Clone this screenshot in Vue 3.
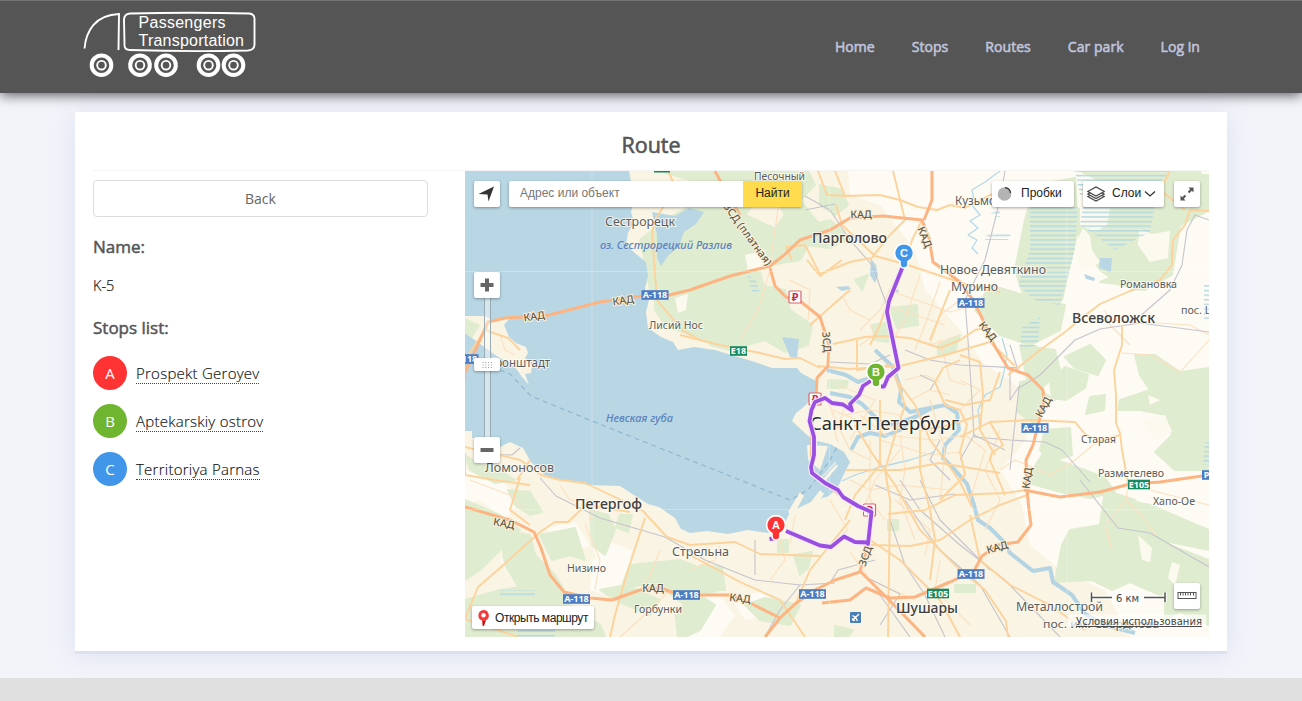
<script setup>
const nav = ['Home', 'Stops', 'Routes', 'Car park', 'Log in']
const wheels = [101.5, 140, 166, 208.5, 233.5]

const stops = [
  { letter: 'A', name: 'Prospekt Geroyev', color: '#ff3333' },
  { letter: 'B', name: 'Aptekarskiy ostrov', color: '#70b530' },
  { letter: 'C', name: 'Territoriya Parnas', color: '#4296ea' },
]

// Map geometry is kept in page units: x 465-1209, y 171-637
const rural = [
  'M848 171H1209V637H1130L1105 590 1060 570 1030 545 1022 505 1000 470 1026 440 1030 400 1010 380 985 365 960 330 925 290 915 250 880 205 850 195Z',
  'M465 470 500 478 520 500 505 520 480 500 465 505Z',
  'M592 560 625 552 645 575 620 600 590 590Z',
  'M500 560 520 545 530 570 515 585Z',
  'M690 600 720 595 735 615 720 637H690Z',
  'M590 535 632 550 625 580 600 575Z',
  'M732 600 765 590 780 612 745 620Z',
  'M545 528 575 522 590 545 570 555Z',
]
const greens = [
  'M660 171H750L765 190 745 215 778 230 765 255 745 268 700 275 675 300 650 290 645 262 640 240 665 220 700 200 690 180Z',
  'M750 171H808L815 185 800 200 820 225 800 260 770 265 762 245 785 215 770 190Z',
  'M655 275 720 265 760 272 765 290 740 325 725 330 715 345 690 335 665 325 655 310Z',
  'M760 285 785 290 790 310 812 325 808 345 785 352 765 340 730 350 710 345 735 325Z',
  'M820 185 842 190 848 205 835 215 820 205Z',
  'M800 228 830 220 850 238 830 248 806 245Z',
  'M1035 185 1075 178 1078 230 1062 300 1050 310 1025 300 1015 270 1025 220Z',
  'M1080 171H1200L1209 210 1180 225 1172 275 1145 290 1120 285 1100 270 1080 240 1075 210 1130 195Z',
  'M990 285 1040 300 1065 305 1060 330 1030 345 1000 335 975 310Z',
  'M1165 175H1209V210L1180 225Z',
  'M1100 282 1150 262 1165 275 1140 290 1125 285Z',
  'M1020 345 1055 350 1060 370 1040 390 1055 400 1030 395Z',
  'M1065 357 1090 345 1105 360 1098 375 1075 368Z',
  'M1065 367 1088 375 1085 388 1066 400 1052 398 1050 382Z',
  'M1090 397 1105 395 1104 410 1086 414Z',
  'M1135 355 1155 355 1180 372 1209 368V470H1175L1155 452 1172 435 1165 415 1140 410 1118 410 1120 400 1150 390 1140 375Z',
  'M1045 430 1070 428 1072 455 1050 462 1040 450Z',
  'M1020 382 1035 380 1042 400 1035 425 1018 412Z',
  'M1105 490 1135 500 1150 520 1170 545 1209 560V605L1180 590 1160 595 1130 582 1112 590 1092 580 1055 582 1062 545 1070 530 1100 525Z',
  'M1042 455 1085 470 1105 478 1115 492 1090 498 1060 492 1025 482Z',
  'M1126 500 1150 505 1209 530V550L1160 540 1140 530Z',
  'M1165 575 1200 575 1209 590V625L1180 612 1165 620Z',
  'M465 500 500 515 520 530 500 550 480 570 465 580Z',
  'M500 530 530 535 535 555 555 575 570 600 555 615 520 590 505 565Z',
  'M500 590 535 585 570 605 600 625 605 637H465V600Z',
  'M508 490 530 492 542 512 530 515 515 505Z',
  'M540 535 575 528 585 560 570 555 552 560Z',
  'M590 510 608 515 615 530 605 555 592 545Z',
  'M620 515 632 515 628 532 616 527Z',
  'M630 565 680 560 705 570 720 590 700 595 685 605 665 590 640 585 620 590Z',
  'M600 590 625 585 660 600 650 615 615 600Z',
  'M675 610 700 595 715 605 700 630 685 637H678Z',
  'M700 565 722 567 725 590 700 590Z',
  'M794 555 812 552 808 568 800 575Z',
  'M745 605 765 598 800 605 790 625 760 620Z',
  'M778 540 788 540 788 552 778 552Z',
  'M890 308 917 305 918 325 897 328Z',
  'M828 380 848 381 846 388 828 388Z',
  'M938 345 960 335 955 352 938 355Z',
  'M872 325 890 322 888 342 875 340Z',
  'M888 520 898 520 898 530 888 530Z',
  'M835 626 853 630 848 637H835Z',
  'M955 585 975 585 975 592 955 592Z',
  'M855 280 868 275 862 290Z',
  'M465 455 480 465 500 470 515 480 495 483 470 470Z',
  'M1055 190 1070 185 1070 205 1060 210Z',
]
const clearings = [
  'M1139 229 1152 234 1170 231 1168 258 1150 262 1138 245Z',
  'M1083 228 1090 236 1092 250 1100 262 1085 272 1076 262 1075 245Z',
  'M1080 205 1110 208 1107 225 1095 232 1080 225Z',
  'M675 298 688 294 686 310 678 313Z',
  'M745 255 765 250 768 268 748 270Z',
  'M1140 420 1165 415 1172 432 1155 440Z',
  'M1148 395 1160 400 1150 405Z',
  'M1138 535 1152 548 1150 562 1142 560Z',
  'M1172 562 1180 565 1175 585 1168 578Z',
]
const waters = [
  'M465 171H629L631 182 641 190 634 201 631 212 634 222 628 233 626 245 636 254 646 262 648 276 645 288 649 300 646 312 648 328 661 337 673 342 678 350 694 347 715 350 738 357 755 362 772 368 797 368 801 373 818 382 815 394 806 405 796 413 792 421 806 434 813 440 830 444 844 452 850 462 843 476 838 487 829 496 813 501 790 512 783 527 768 533 748 530 728 534 707 531 690 533 681 529 675 518 659 507 648 504 620 486 588 485 566 481 548 478 531 462 523 448 510 442 500 447 491 440 472 438 472 431 465 431Z',
  'M652 212 675 216 689 208 704 212 696 224 684 232 679 246 668 256 661 266 657 258 657 235Z',
  'M782 337 799 339 797 358 790 357Z',
  'M1100 258 1112 258 1111 272 1099 268Z',
  'M1084 274 1095 278 1094 281 1086 279Z',
  'M871 259 876 265 878 275 875 283 870 275Z',
  'M892 287 895 284 899 292 895 293Z',
  'M836 287 848 286 851 289 842 291Z',
]
const island = 'M465 316H485L492 320 510 318 504 325 509 337 516 343 526 347 528 353 525 358 532 365 531 373 525 374 529 385 522 377 515 367 498 357 487 349 465 333Z'
const rivers = [
  'M827 370 846 375 858 382 870 378 880 379',
  'M830 393 850 397 862 404 880 422 893 425 915 417 928 410 935 407',
  'M875 350 893 367 901 390 899 402 910 412 930 408 945 405 957 413 959 430 945 445 943 458 955 470 967 484 974 505 978 520 990 528 1005 543 1010 553 1033 571 1050 568 1053 582 1072 595 1085 614 1104 625 1135 633',
  'M851 450 858 437 870 433 885 436 900 430 916 416',
]
const streams = [
  'M1002 338 1007 355 1004 372 1000 387 985 395 978 410 980 428',
  'M972 205 980 215 970 221 978 228 968 235 977 240 972 248 978 254',
  'M842 481 855 475 880 467 910 460 935 452',
  'M1000 171 985 182 972 190 974 200',
  'M816 486 830 470 845 455',
  'M640 430 648 426',
]
const highways = [
  'M465 372 470 362 480 340 488 322 505 318 545 316 600 302 642 296 665 296 690 290 730 276 770 266 783 256 800 240 830 230 850 218 883 216 922 220 929 238 933 262 960 282 973 300 984 322 994 345 1008 368 1028 375 1043 390 1044 402 1038 425 1033 445 1026 460 1027 490 1029 510 1031 525 1018 542 998 545 982 556 974 571 950 582 915 597 890 598 866 588 850 600 822 603',
  'M770 268 775 286 786 297 800 301 820 317 829 345 828 366 817 378 816 398 810 415 812 440 811 470 840 495 871 513 868 545 860 571 892 603 925 637',
  'M465 507 510 520 534 532 541 548 550 575 564 592 590 598 612 600 640 590 660 588 680 595 730 595 752 604 780 618 795 604 815 590 835 580 860 572',
  'M1024 490 1060 497 1100 492 1130 484 1160 482 1209 475',
  'M932 171 932 200 924 220',
  'M715 171 725 190 740 215',
  'M780 618 765 637',
]
const roads = [
  'M835 171 845 196 880 195 900 200 918 207 937 210 950 205 965 208 990 195 1005 191',
  'M836 205 842 225 875 256 905 264 965 284 1000 292',
  'M818 171 827 195 850 196',
  'M922 220 912 240 905 264',
  'M792 260 786 247 805 245 820 274 850 262 870 258',
  'M807 260 820 276 842 260',
  'M668 171 676 188 656 218 652 232 655 275 657 300 682 330 700 340',
  'M850 290 835 303 810 325',
  'M1172 258 1173 240 1185 225 1190 210 1209 211',
  'M1172 250 1172 265 1160 280 1130 291 1100 304 1083 317 1065 332 1040 350 1020 366 1008 375',
  'M1122 325 1122 345 1114 370 1116 395 1116 423 1120 433 1122 450 1128 483',
  'M680 335 720 345 760 353 785 359 800 358 820 368',
  'M960 437 990 422 1030 420 1075 422 1085 434 1098 441 1120 435',
  'M990 422 1003 445 992 453 990 460 1005 495',
  'M818 366 850 369 900 366 945 355 990 342 1015 366',
  'M893 328 895 350 895 375 905 405 895 435 885 470 890 500 888 637',
  'M833 344 865 337 883 336 910 338 940 348 960 340 975 330 985 328',
  'M960 360 943 368 935 382 945 405 960 410 967 425 960 452 965 475 950 490 940 500',
  'M845 470 865 470 900 470 940 463 970 468 1000 473',
  'M888 514 925 510 955 495 1005 493 1027 490',
  'M870 545 910 546 940 540 970 520 1000 505 1027 495',
  'M855 425 870 450 880 465 855 495 845 520',
  'M895 378 915 405 930 440 945 460 960 482 972 507',
  'M893 171 905 220 890 235 870 260',
  'M960 355 980 362 983 395 980 430 995 455',
  'M1000 372 990 400 965 405 945 400',
  'M880 465 880 400',
  'M920 430 920 470 930 510 935 540 930 580',
  'M857 340 857 370 890 365',
  'M878 460 895 485 920 530 960 570 985 590 1006 621 1008 637',
  'M465 447 495 454 520 460 541 475 560 480 585 483 600 490 642 510 667 537 690 545 735 542 760 554 820 556',
  'M518 637 465 619 478 587 500 568 540 532 555 522 568 522 586 505 630 512',
  'M520 478 510 510 530 525',
  'M530 460 517 480',
  'M645 518 628 570 615 615 610 637',
  'M690 555 740 582 780 600 805 637',
  'M850 520 830 545 810 570 795 605 780 618',
  'M970 515 980 560 1010 585 1050 605 1085 630',
  'M870 540 900 560 930 590 940 600 960 637',
  'M922 430 950 425 980 415',
  'M895 280 880 325 870 345',
  'M950 290 930 340',
  'M1170 171 1160 190 1185 210',
  'M465 453 465 475 495 480 530 485',
  'M465 360 485 330 508 338 520 350',
]
const minor = [
  'M900 270 880 310 860 330', 'M920 275 905 320 890 345', 'M940 282 925 325 915 350',
  'M888 290 950 312 975 305', 'M885 305 945 325', 'M843 297 850 310 870 320',
  'M838 385 875 400 850 440', 'M827 400 840 430 850 450 870 460', 'M832 410 870 425',
  'M848 400 835 432 838 442', 'M860 415 885 435 935 440 965 435', 'M900 435 905 470 900 500 915 540',
  'M910 400 930 390 950 395', 'M905 380 925 375 940 382', 'M880 440 930 455 962 452',
  'M850 480 870 490 900 485 950 490', 'M870 440 870 500 885 520', 'M930 400 945 450 940 500',
  'M900 450 875 480 865 505', 'M895 500 930 530 925 555', 'M1000 430 985 470 1000 500 985 530',
  'M965 435 985 450 970 500', 'M960 380 980 390 960 410', 'M940 340 950 380 965 385',
  'M860 345 875 335 870 325', 'M1122 353 1150 355 1180 372 1209 340', 'M1098 441 1075 460 1050 475 1015 460 1000 470',
  'M1105 310 1110 325 1130 345', 'M1110 320 1190 325 1209 335', 'M1128 483 1126 500 1105 525 1112 550',
  'M1126 500 1145 520 1155 535', 'M1150 490 1209 505', 'M470 480 510 495 525 510',
  'M560 485 570 500 595 500 590 520', 'M660 550 650 575 640 590', 'M720 545 715 560 690 570',
  'M780 540 785 560 770 580', 'M620 637 650 610 670 590', 'M585 524 600 560 595 590',
  'M795 515 790 545', 'M830 500 848 530 825 550', 'M500 335 505 350 515 355',
  'M790 280 810 290 808 320', 'M770 270 758 310 740 340', 'M850 552 870 580 915 600',
  'M940 560 935 590 970 625', 'M870 430 905 425 935 432', 'M845 415 870 410 900 415',
  'M960 300 940 315 930 345 960 335', 'M780 195 775 230 770 265',
]
const rails = [
  'M805 196 830 210 850 240 872 265 885 300 895 355', 'M465 360 466 380',
  'M1005 171 1000 200 985 260 965 300 968 340 972 400 974 437', 'M974 437 1010 440 1045 442 1062 450 1090 482',
  'M960 460 974 435 1005 450', 'M1010 470 1013 440 1019 388 1040 375 1075 340 1100 329 1140 323 1209 332',
  'M1209 220 1195 215 1187 230 1182 265 1170 290 1130 325', 'M540 478 556 496 600 518 665 537 705 560 755 580 800 585 835 583',
  'M755 540 755 575', 'M800 585 780 610 765 637', 'M830 583 838 570 875 560',
  'M905 500 925 530 940 550 980 585 1010 637', 'M900 480 920 510 960 545 1005 580 1060 637',
  'M870 579 900 594 880 625', 'M920 480 940 520 990 570', 'M920 375 935 382 930 390',
  'M890 520 905 565 925 595 945 637', 'M880 595 910 637', 'M905 350 930 360 960 365 1020 368',
  'M875 485 910 500 955 494', 'M1010 370 1010 400 1020 385', 'M830 362 870 364 890 355',
  'M1080 480 1118 528 1150 533 1209 567', 'M940 440 930 460 950 480', 'M1010 345 1018 370', 'M480 454 512 455 520 448',
  'M805 210 835 204',
]
const bogs = [
  'M1030 205H1078L1075 250 1060 305 1035 300 1018 285 1030 250Z', 'M1075 171H1170L1160 182 1080 195Z',
  'M1085 195 1155 205 1150 232 1115 250 1095 235 1080 225Z', 'M1022 327 1040 317 1038 345 1020 350Z',
  'M987 235 1012 232 1008 240H985Z', 'M1204 285H1209V320H1204Z', 'M1205 442H1209V465H1203Z',
  'M500 590H535V596H500Z', 'M520 626H555V637H515Z', 'M748 275 756 280 760 293 752 292Z', 'M985 215 1000 210 1000 217Z',
]
const badges = [
  ['А-118', 655, 295], ['А-118', 971, 303], ['А-118', 1035, 428], ['А-118', 576.5, 599],
  ['А-118', 686.5, 595], ['А-118', 812.5, 594], ['А-118', 971, 574], ['А-118', 465, 359],
  ['Е18', 738.5, 351, 1], ['Е105', 1139, 484.5, 1], ['Е105', 938, 593.5, 1], ['Р-21', 1213, 475],
]
// text, left edge, baseline, drawn width, size, style class
const places = [
  ['Песочный', 754, 180, 51, 10.5], ['Сестрорецк', 605, 226, 70, 12],
  ['Парголово', 812, 243, 75, 14, 'town'], ['Кузьмолово', 955, 205, 68, 12],
  ['Новое Девяткино', 940, 274, 106, 12], ['Мурино', 951, 290.5, 47, 12.5],
  ['Романовка', 1120, 287.5, 57, 11], ['Всеволожск', 1072, 323, 83, 14, 'town'],
  ['пос. Щеглово', 1181, 313.5, 70, 10.5], ['Лисий Нос', 649, 328.5, 54, 11],
  ['Кронштадт', 488, 367, 62, 12], ['Ломоносов', 485, 472, 69, 12],
  ['Петергоф', 575, 509, 67, 14.5, 'town'], ['Стрельна', 672, 556, 57, 12.5],
  ['Низино', 567, 572, 39, 10.5], ['Горбунки', 634, 612.5, 48, 10.5],
  ['Шушары', 896, 613, 62, 14, 'town'], ['Металлострой', 1016, 611, 87, 12],
  ['пос. им. Свердлова', 1043, 628, 116, 11.5], ['Старая', 1081, 443, 35, 11],
  ['Разметелево', 1098, 477, 66, 11], ['Хапо-Ое', 1153, 505, 42, 11],
  ['Санкт-Петербург', 810, 429.5, 149, 18.5, 'city'],
  ['оз. Сестрорецкий Разлив', 600, 249, 132, 11, 'sea'], ['Невская губа', 606, 421.5, 67, 11.5, 'sea'],
]
const roadNames = [
  ['КАД', 534, 316, -8], ['КАД', 623, 300, -8], ['КАД', 861, 214, -2], ['КАД', 925, 237, 68],
  ['КАД', 988, 331, 52], ['КАД', 1043, 407, -62], ['КАД', 1027, 478, -82], ['КАД', 997, 547, -16],
  ['КАД', 504, 523, 10], ['КАД', 653, 588, 0], ['КАД', 740, 598, 6], ['ЗСД', 827, 342, 86], ['ЗСД', 865, 556, -70],
]
const tolls = [[795, 297], [815, 399], [869.5, 510]]
const pins = [['A', 776, 525, '#ff3333'], ['B', 876, 372, '#70b530'], ['C', 904, 253, '#4296ea']]
const route = 'M769.500 539 777 538M786 531 820 545.500 831 547 844 536.500 855 542 868 542.500 868 544 871.500 512 858 506 843 497 838 490 825 483 812 473 811 467 814 455 814 437 809.500 421 811.500 410 815 402 825 398 832 403 843 404.500 852 410.500 850 404 859 395 863 386 872 380M881 386.500H884L888 377 898.500 368 887 312 889 301 903 266'
const scale = 'M1091.500 592.500V602M1091.500 597.500H1112M1144 597.500H1164.500M1165 592.500V602'
</script>

<template>
  <div class="page">
    <header class="header">
      <svg class="logo" viewBox="80 8 180 72" width="180" height="72">
        <g fill="none" stroke="#fff" stroke-width="1.900">
          <path d="M84.500 48.500C86 31 95 15 119 14L118.500 50" />
          <path d="M130 13.500Q190 12 249 13.500Q255 14 254.500 20V45Q254 50 248 50.500Q190 52 130 50Q124 50 124.500 44L124 20Q124 14 130 13.500Z" />
        </g>
        <g v-for="x in wheels" :key="x" fill="none" stroke="#fff">
          <circle :cx="x" cy="65.200" r="9.800" stroke-width="4" />
          <circle :cx="x" cy="65.200" r="4.300" stroke-width="1.900" />
        </g>
        <g class="logo-text">
          <text x="138.500" y="28" textLength="87">Passengers</text>
          <text x="138.500" y="46" textLength="105.500">Transportation</text>
        </g>
      </svg>
      <nav class="nav">
        <a v-for="n in nav" :key="n">{{ n }}</a>
      </nav>
    </header>

    <main class="card">
      <h1>Route</h1>
      <div class="columns">
        <section class="info">
          <button class="back">Back</button>
          <h2>Name:</h2>
          <p>K-5</p>
          <h2 class="list-title">Stops list:</h2>
          <ul>
            <li v-for="s in stops" :key="s.letter">
              <span class="dot" :style="{ background: s.color }">{{ s.letter }}</span>
              <span class="stop">{{ s.name }}</span>
            </li>
          </ul>
        </section>

        <section class="map">
          <svg class="canvas" viewBox="465 171 744 466" width="744" height="466">
            <defs>
              <pattern id="bog" width="8" height="4.600" patternUnits="userSpaceOnUse">
                <rect width="8" height="1.500" fill="#b5d9e2" />
              </pattern>
            </defs>
            <rect x="465" y="171" width="744" height="466" fill="#f9f4e3" />
            <path v-for="d in rural" :key="d" :d="d" fill="#fefbf4" />
            <path v-for="d in greens" :key="d" :d="d" class="green" />
            <path v-for="d in clearings" :key="d" :d="d" fill="#fcf9ef" />
            <path v-for="d in bogs" :key="d" :d="d" fill="url(#bog)" />
            <path v-for="d in waters" :key="d" :d="d" fill="#b9d6e4" />
            <path :d="island" fill="#f9f4e3" />
            <path d="M465 318 480 325 472 338 465 333Z" fill="#e0ecd0" />
            <path d="M807 445 828 446 820 470 808 460Z M818 481 835 462 838 466 822 485Z M788 512 800 492 804 496 793 516Z M805 510 820 490 824 494 812 512Z" fill="#f9f4e3" />
            <g class="line">
              <path v-for="d in streams" :key="d" :d="d" stroke="#b4d8e8" stroke-width="1.300" />
              <path v-for="d in rivers" :key="d" :d="d" stroke="#b4d4e4" stroke-width="4" />
              <path v-for="d in minor" :key="d" :d="d" stroke="#fde0bf" stroke-width="1.100" />
              <path v-for="d in rails" :key="d" :d="d" stroke="#c5c4cc" stroke-width="1.100" />
              <path v-for="d in roads" :key="d" :d="d" stroke="#fdd39b" stroke-width="1.900" />
              <path v-for="d in highways" :key="d" :d="d" stroke="#fcb482" stroke-width="3" />
              <path d="M500 370 510 374 531 396 592 421 715 470 790 500 808 490 830 460 838 445" stroke="#8db9d0" stroke-width="1.200" stroke-dasharray="5 4" />
              <path d="M592 171V637M1067 171V637M465 271.500H1209M465 509.500H1209M829.500 171V637" stroke="#fff" stroke-opacity=".35" stroke-width=".8" />
            </g>
            <g v-for="b in badges" :key="b[1] + '-' + b[2]">
              <rect :x="b[1] - (b[0].length * 2.500 + 1)" :y="b[2] - 4.800" :width="b[0].length * 5 + 2" height="9.600" :fill="b[3] ? '#188a62' : '#4b7cc4'" />
              <text class="badge" :x="b[1]" :y="b[2] + 3.300">{{ b[0] }}</text>
            </g>
            <rect x="654" y="168" width="16" height="4.500" fill="#188a62" />
            <g v-for="t in tolls" :key="t[0]">
              <rect :x="t[0] - 6" :y="t[1] - 6" width="12" height="12" rx="1" fill="#fff" stroke="#dc6570" stroke-width="1.200" />
              <text class="toll" :x="t[0]" :y="t[1] + 4">₽</text>
            </g>
            <text v-for="r in roadNames" :key="r[1]" class="road" :transform="`translate(${r[1]} ${r[2]}) rotate(${r[3]})`" y="4">{{ r[0] }}</text>
            <text class="road" transform="translate(748 234) rotate(54)" y="4" textLength="74">ЗСД (платная)</text>
            <text v-for="p in places" :key="p[0]" :x="p[1]" :y="p[2]" :textLength="p[3]" lengthAdjust="spacingAndGlyphs" :font-size="p[4]" :class="['place', p[5]]">{{ p[0] }}</text>
            <g transform="translate(855.500 617.500)">
              <rect x="-5.500" y="-5.500" width="11" height="11" rx="1" fill="#477fb6" />
              <path d="M3.500-3.500-3 3M-3-2 0 0 2 3.500M-3.500 1 -1 3.500" fill="none" stroke="#fff" stroke-width="1.500" />
            </g>
            <g class="line">
              <path :d="route" stroke="#f6eafd" stroke-width="6" />
              <path :d="route" stroke="#9a4fe0" stroke-width="3.800" />
            </g>
            <g v-for="p in pins" :key="p[0]" :transform="`translate(${p[1]} ${p[2]})`">
              <path d="M0-9.400A9.400 9.400 0 0 1 4 8.500V11A4 4 0 0 1-4 11V8.500A9.400 9.400 0 0 1 0-9.400Z" :fill="p[3]" stroke="#fff" stroke-width="1.600" />
              <text class="pin" y="3.900">{{ p[0] }}</text>
            </g>
            <g>
              <rect x="1068" y="614.500" width="138" height="12.500" fill="#fff" opacity=".65" />
              <rect x="1112" y="591" width="32" height="13" rx="2" fill="#fff" opacity=".75" />
              <path :d="scale" fill="none" stroke="#fff" stroke-width="4" opacity=".7" />
              <path :d="scale" fill="none" stroke="#555" stroke-width="1.500" />
              <text class="copy" x="1116" y="602" textLength="23">6 км</text>
              <text class="copy" x="1076" y="625" textLength="126" text-decoration="underline">Условия использования</text>
            </g>
          </svg>

          <div class="zoom-track"></div>
          <div class="ctl locate">
            <svg width="26" height="26" viewBox="0 0 26 26"><path d="M20 5.500 14.500 20.500 13.500 13.500 4.500 13Z" fill="#333" /></svg>
          </div>
          <div class="ctl search"><span>Адрес или объект</span><b>Найти</b></div>
          <div class="ctl traffic">
            <svg width="16" height="16" viewBox="0 0 16 16"><circle cx="7.500" cy="8" r="6.800" fill="#b4b4b4" /><path d="M8 1.600A6.500 6.500 0 0 1 13.600 7" stroke="#333" stroke-width="1.300" fill="none" /></svg>
            <span>Пробки</span>
          </div>
          <div class="ctl layers">
            <svg width="18" height="16" viewBox="0 0 18 16" fill="#fff" stroke="#444" stroke-width="1.100"><path d="M.8 10.500 9 6.500 17.200 10.500 9 15Z" /><path d="M.8 8 9 4 17.200 8 9 12.500Z" /><path d="M.8 5.500 9 1 17.200 5.500 9 10Z" /></svg>
            <span>Слои</span>
            <svg width="12" height="8" viewBox="0 0 12 8"><path d="M1 1.500 6 6 11 1.500" fill="none" stroke="#333" stroke-width="1.300" /></svg>
          </div>
          <div class="ctl full">
            <svg width="26" height="26" viewBox="0 0 26 26" fill="#555"><path d="M14.500 6.500H19.500V11.500L17.800 9.800 15.300 12.200 13.800 10.700 16.200 8.200ZM6.500 14.500V19.500H11.500L9.800 17.800 12.200 15.300 10.700 13.800 8.200 16.200Z" /></svg>
          </div>
          <div class="ctl plus">
            <svg width="26" height="26" viewBox="0 0 26 26"><path d="M13 6.500V19.500M6.500 13H19.500" stroke="#666" stroke-width="4" /></svg>
          </div>
          <div class="ctl thumb">
            <svg width="26" height="14" viewBox="0 0 26 14"><path d="M8.500 4.500H18M8.500 7H18M8.500 9.500H18" stroke="#999" stroke-width="1" stroke-dasharray="1 1.800" /></svg>
          </div>
          <div class="ctl minus">
            <svg width="26" height="26" viewBox="0 0 26 26"><path d="M6.500 13H19.500" stroke="#666" stroke-width="4" /></svg>
          </div>
          <div class="ctl ruler">
            <svg width="26" height="26" viewBox="0 0 26 26" fill="none" stroke="#555"><rect x="4" y="9.500" width="18" height="6" /><path d="M6.500 10V12.500M9 10V12.500M11.500 10V12.500M14 10V12.500M16.500 10V12.500M19.500 10V12.500" /></svg>
          </div>
          <div class="ctl open">
            <svg width="13" height="18" viewBox="0 0 13 18"><path d="M6.500 1A5.500 5.500 0 0 1 9 11.300L6.800 17H5.800L5.200 11.700A5.500 5.500 0 0 1 6.500 1Z" fill="#f43a3a" /><path d="M5.500 12 8.500 12 6.800 17H5.800Z" fill="#b9151c" /><circle cx="6.500" cy="6.300" r="2.200" fill="#fff" /></svg>
            <span>Открыть маршрут</span>
          </div>
        </section>
      </div>
    </main>
    <footer></footer>
  </div>
</template>

<style>
body {
  background: #f3f4fa;
  overflow: hidden;
}
</style>

<style scoped>
* {
  box-sizing: border-box;
}
.page {
  height: 701px;
  display: flex;
  flex-direction: column;
  font-family: 'Open Sans', sans-serif;
  font-weight: 300;
  color: #111;
}
.header {
  height: 93px;
  flex: none;
  background: #555;
  border-top: 1px solid #737373;
  box-shadow: 0 2px 12px rgba(0, 0, 0, .65);
  padding: 7px 102px 0 80px;
  display: flex;
  justify-content: space-between;
}
.logo-text {
  font: 400 16px 'Liberation Sans', sans-serif;
  fill: #fff;
}
.nav {
  display: flex;
  gap: 37px;
  padding-top: 29px;
  font-size: 14px;
  line-height: 20px;
  font-weight: 400;
  letter-spacing: .05px;
  color: #bfc3dc;
  -webkit-text-stroke: .6px #bfc3dc;
}
.card {
  width: 1152px;
  height: 539px;
  margin: 19px auto 0;
  padding: 0 18px;
  flex: none;
  background: #fff;
  box-shadow: 0 3px 0 #dde1ef, 0 4px 22px rgba(160, 170, 215, .27);
}
h1 {
  margin: 0;
  height: 59px;
  padding-top: 18px;
  border-bottom: 1px solid #f4f4f4;
  font-size: 21.5px;
  line-height: 30px;
  font-weight: 400;
  text-align: center;
  color: #555;
  -webkit-text-stroke: .6px #555;
}
.columns {
  display: flex;
  justify-content: space-between;
}
.info {
  width: 335px;
  padding-top: 9px;
}
.back {
  display: block;
  width: 100%;
  height: 37px;
  padding: 0;
  border: 1px solid #ddd;
  border-radius: 4px;
  background: #fff;
  font: 400 14px 'Open Sans', sans-serif;
  color: #666;
}
h2 {
  margin: 18px 0 0;
  font-size: 17px;
  line-height: 24px;
  font-weight: 400;
  color: #555;
  -webkit-text-stroke: .5px #555;
}
p {
  margin: 17px 0 0;
  font-size: 14.5px;
  line-height: 20px;
  -webkit-text-stroke: .15px #111;
}
.list-title {
  margin-top: 20px;
}
ul {
  margin: 16px 0 0;
  padding: 0;
  list-style: none;
  display: flex;
  flex-direction: column;
  gap: 14px;
}
li {
  height: 34px;
  display: flex;
  align-items: center;
  gap: 9px;
}
.dot {
  width: 34px;
  height: 34px;
  border-radius: 50%;
  color: #fff;
  font-size: 15px;
  font-weight: 500;
  line-height: 34px;
  text-align: center;
}
.stop {
  font-size: 15px;
  line-height: 20px;
  letter-spacing: .25px;
  border-bottom: 1px dotted #444;
  -webkit-text-stroke: .15px #111;
}
.map {
  position: relative;
  width: 744px;
  height: 466px;
  overflow: hidden;
}
.canvas {
  display: block;
}
.green {
  fill: #e0ecd0;
  stroke: #e0ecd0;
  stroke-width: 2;
  stroke-linejoin: round;
}
.line {
  fill: none;
  stroke-linejoin: round;
}
.place {
  font-family: 'Noto Sans', sans-serif;
  font-weight: 400;
  fill: #5c5c5c;
  stroke: #fffdf5;
  stroke-width: 2px;
  stroke-opacity: .75;
  paint-order: stroke;
}
.town {
  font-weight: 500;
  fill: #404040;
}
.city {
  fill: #2c2c2c;
}
.sea {
  font-style: italic;
  font-weight: 500;
  fill: #5b83bd;
  stroke: none;
}
.road {
  font: 500 10.5px 'Noto Sans', sans-serif;
  fill: #625946;
  text-anchor: middle;
  stroke: #fbf0da;
  stroke-width: 2px;
  paint-order: stroke;
}
.badge {
  font: 700 9px 'Noto Sans', sans-serif;
  fill: #fff;
  text-anchor: middle;
}
.toll {
  font: 700 11px 'Noto Sans', sans-serif;
  fill: #d02c45;
  text-anchor: middle;
}
.pin {
  font: 700 11px 'Liberation Sans', sans-serif;
  fill: #fff;
  text-anchor: middle;
}
.copy {
  font: 400 10px 'DejaVu Sans', sans-serif;
  fill: #444;
}
.ctl {
  position: absolute;
  height: 26px;
  display: flex;
  align-items: center;
  background: #fff;
  border-radius: 2px;
  box-shadow: 0 1px 3px rgba(0, 0, 0, .35);
  font: 400 12px 'Liberation Sans', sans-serif;
  color: #222;
  white-space: nowrap;
}
.ctl svg {
  display: block;
  flex: none;
}
.locate { left: 9px; top: 10px; width: 26px; }
.search { left: 44px; top: 10px; width: 293px; justify-content: space-between; }
.search span { padding-left: 11px; color: #777; line-height: 24px; height: 26px; }
.search b {
  width: 59px;
  height: 26px;
  background: #ffdb4d;
  font-weight: 400;
  line-height: 24px;
  text-align: center;
}
.traffic { left: 527px; top: 10px; width: 82px; padding-left: 5px; gap: 8px; }
.layers { left: 618px; top: 10px; width: 81px; padding-left: 4px; gap: 7px; }
.traffic span, .layers span { line-height: 24px; height: 26px; }
.layers svg:last-child { margin-left: -4px; }
.full { left: 708.5px; top: 10px; width: 26px; }
.plus { left: 9px; top: 101px; width: 26px; }
.minus { left: 9px; top: 266px; width: 26px; }
.thumb { left: 9px; top: 187px; width: 26px; height: 13px; }
.zoom-track {
  position: absolute;
  left: 19px;
  top: 120px;
  width: 7px;
  height: 150px;
  background: rgba(255, 255, 255, .4);
  border: solid #9aabb3;
  border-width: 0 1px;
}
.ruler { left: 709px; top: 412px; width: 26px; }
.open { left: 7px; top: 435px; width: 122px; height: 23px; padding-left: 5px; gap: 5px; letter-spacing: -.45px; }
footer {
  margin-top: auto;
  height: 23px;
  flex: none;
  position: relative;
  background: #e0e0e0;
}
</style>
